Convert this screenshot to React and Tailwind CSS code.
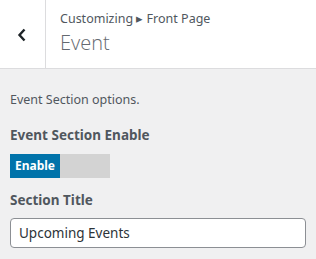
export default function App() {
  return (
    <div className="w-[316px] h-[259px] bg-[#f0f0f1] overflow-hidden" style={{ fontFamily: '"Noto Sans", "Open Sans", sans-serif' }}>
      <div className="h-[69px] bg-white border-b border-[#dcdcde] flex">
        <div className="w-[46px] h-full border-r border-[#dcdcde] flex items-center justify-center">
          <svg width="10" height="14" viewBox="0 0 10 14" className="mr-[2px] mt-[1px]">
            <path d="M7.5 1.5 L2.5 7 L7.5 12.5" fill="none" stroke="#1d2327" strokeWidth="2.4" strokeLinecap="butt" strokeLinejoin="miter" />
          </svg>
        </div>
        <div className="pl-[14px] pt-[10px] flex flex-col">
          <div className="text-[12.5px] leading-[18px] text-[#50575e]">Customizing ▸ Front Page</div>
          <div className="text-[20px] leading-[26px] font-light text-[#646970] mt-[2px] font-['Open_Sans',sans-serif]">Event</div>
        </div>
      </div>
      <div className="px-[10px] pt-[23px]">
        <div className="text-[12.5px] leading-[16px] text-[#50575e]">Event Section options.</div>
        <div className="mt-[17px] text-[13.5px] leading-[20px] font-bold text-[#50575e]">Event Section Enable</div>
        <div className="mt-[9px] w-[100px] h-[24px] flex">
          <div className="w-[50px] h-full bg-[#0073aa] text-white text-[12px] font-bold flex items-center justify-center">Enable</div>
          <div className="w-[50px] h-full bg-[#d3d3d3]"></div>
        </div>
        <div className="mt-[12px] text-[13.5px] leading-[20px] font-bold text-[#50575e]">Section Title</div>
        <div className="mt-[8px] w-[296px] h-[30px] bg-white border border-[#8c8f94] rounded-[4px] flex items-center pl-[8px] text-[13.5px] text-[#2c3338]">Upcoming Events</div>
      </div>
    </div>
  );
}
